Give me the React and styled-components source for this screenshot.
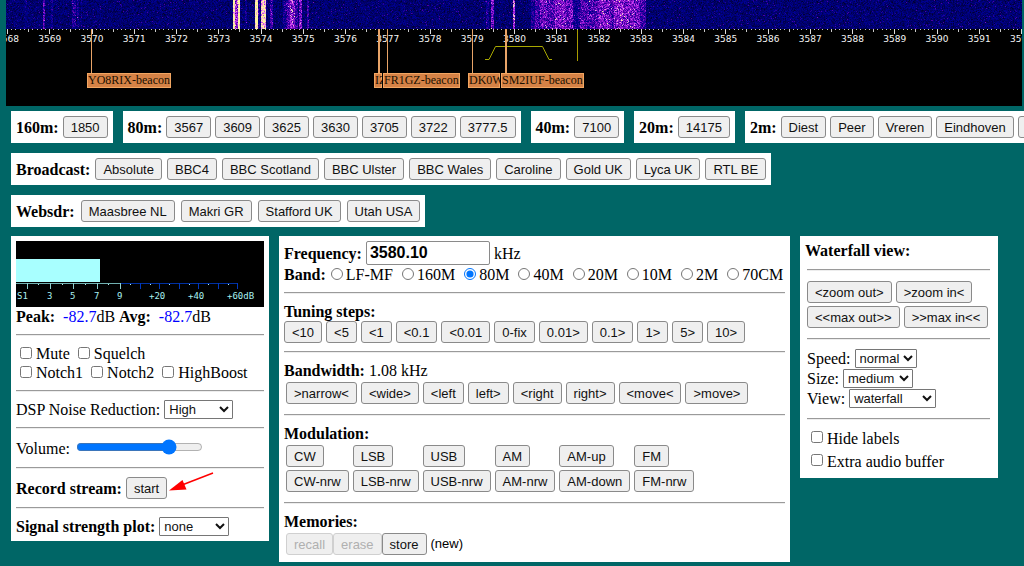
import React, { Component } from 'react'
import styled, { createGlobalStyle, css } from 'styled-components'

const GlobalStyle = createGlobalStyle`
    body {
        margin: 0;
        background: #006666;
        color: #000;
        font-family: "Liberation Serif", "Times New Roman", serif;
        font-size: 16px;
        line-height: 19px;
        overflow-x: hidden;
    }
`

const Page = styled.div`
    overflow: hidden;
`

const Spectrum = styled.div`
    margin: 0 2px 0 6px;
    background: #000;
`

const Drawing = styled.svg`
    display: block;
    width: 100%;
    height: auto;
`

const Presets = styled.nav`
    display: flex;
    flex-direction: column;
    gap: 10px;
    padding: 5px 0 0 11px;
`

const PresetLine = styled.div`
    display: flex;
    gap: 10px;
`

const PresetBox = styled.div`
    display: flex;
    flex: none;
    align-items: center;
    gap: ${props => props.$gap || '4px'};
    padding: 5px;
    background: #fff;
`

const Panels = styled.main`
    display: flex;
    align-items: flex-start;
    gap: 10px;
    padding: 9px 0 0 11px;
`

const Panel = styled.section`
    flex: none;
    box-sizing: border-box;
    padding: 5px;
    background: #fff;
    ${props => props.$width && css`
        width: ${props.$width};
    `}
`

const Indent = styled.div`
    padding: 1px 3px 2px 2px;
`

const Row = styled.div`
    display: flex;
    align-items: center;
    white-space: nowrap;
    gap: ${props => props.$gap || '4px'};
    min-height: ${props => props.$height || '19px'};
`

const ButtonRow = styled.div`
    display: flex;
    gap: ${props => props.$gap || '4px'};
    padding: ${props => props.$padding || '0'};
`

const Stack = styled.div`
    display: flex;
    flex-direction: column;
    gap: ${props => props.$gap || '0'};
    padding: ${props => props.$padding || '0'};
`

const ModeGrid = styled.div`
    display: grid;
    grid-template-columns: repeat(6, max-content);
    justify-items: start;
    gap: 3px 4px;
    padding: 2px;
`

const Title = styled.h2`
    margin: 0;
    font-size: 16px;
    line-height: 19px;
`

const Name = styled.b`
    white-space: nowrap;
`

const Rule = styled.hr`
    margin: 8px 0;
    border: 0;
    border-top: 1px solid #9a9a9a;
    border-bottom: 1px solid #ededed;
`

const Button = styled.button`
    box-sizing: border-box;
    height: 22px;
    padding: 0 7px;
    border: 1px solid #8a8a8a;
    border-radius: 3px;
    background: #efefef;
    color: #111;
    font-family: "Liberation Sans", Arial, sans-serif;
    font-size: 13px;
    white-space: nowrap;
    &:hover:enabled {
        background: #e5e5e5;
    }
    &:disabled {
        border-color: #d0d0d0;
        color: #b0b0b0;
    }
`

const Select = styled.select`
    box-sizing: border-box;
    width: ${props => props.$width};
    height: 19px;
    border: 1px solid #767676;
    border-radius: 1px;
    background-color: #fff;
    color: #111;
    font-family: "Liberation Sans", Arial, sans-serif;
    font-size: 13px;
`

const Frequency = styled.input`
    box-sizing: border-box;
    width: 124px;
    height: 24px;
    padding: 0 3px;
    border: 1px solid #8a8a8a;
    border-radius: 2px;
    font-family: "Liberation Sans", Arial, sans-serif;
    font-size: 16px;
    font-weight: bold;
`

const Option = styled.label`
    display: flex;
    align-items: center;
`

const Check = styled.input`
    width: 12px;
    height: 12px;
    margin: 0 4px 2px 4px;
`

const Radio = styled.input`
    width: 12px;
    height: 12px;
    margin: 0 3px 2px 0;
`

const Slider = styled.input`
    width: 127px;
    height: 16px;
    margin: 0 0 2px 2px;
`

const Level = styled.span`
    color: #0000ff;
`

const Note = styled.span`
    padding-left: 4px;
    font-family: "Liberation Sans", Arial, sans-serif;
    font-size: 13px;
    line-height: 22px;
`

const Pointed = styled.span`
    position: relative;
    display: flex;
`

const Arrow = styled.svg`
    position: absolute;
    left: 100%;
    top: -5px;
`

// ---- waterfall ----

const palette = ['#000030', '#00004c', '#000066', '#00007c', '#000092', '#2400a0', '#4c00a8', '#7c10c4', '#a420e0', '#cc48f0', '#f0a8d8', '#fff4a0']

// [from, to, strength] in pixels of the waterfall
const signals = [
    [19, 21, 1], [37, 39, 3.5], [45, 47, 1.5], [66, 70, 2], [71, 73, 2], [75, 76, 1.5],
    [227, 229, 9], [229, 232, 5.5], [232, 234, 9], [239, 241, 1.5], [249, 252, 9],
    [252, 254, 2], [255, 260, 8], [264, 267, 3], [277, 281, 2], [281, 284, 3.5], [284, 289, 5],
    [289, 292, 3], [293, 296, 4.5], [301, 303, 3], [480, 483, 2], [485, 488, 4],
    [507, 509, 6], [525, 529, 2], [529, 534, 3], [534, 541, 4], [541, 549, 3.5],
    [549, 560, 4.5], [560, 567, 4], [567, 574, 2], [574, 592, 3.5], [592, 604, 4.5],
    [604, 608, 3.5], [608, 617, 5], [617, 634, 4.5], [634, 640, 3],
]

const makeWaterfall = (width, height) => {
    const strength = new Array(width).fill(0)
    signals.forEach(([from, to, s]) => strength.fill(s, from, to))
    let seed = 4711
    const random = () => {
        seed = (seed * 1103515245 + 12345) % 2147483648
        return seed / 2147483648
    }
    const paths = palette.map(() => '')
    for (let y = 0; y < height; y++) {
        let start = 0
        let last = -1
        for (let x = 0; x <= width; x++) {
            let color = -2
            if (x < width) {
                const noise = (random() + random()) * 2.4 + (random() > 0.94 ? 2 : 0)
                const spread = strength[x] > 7 ? 0 : strength[x] * (random() - 0.5) * 0.6
                color = Math.max(0, Math.min(11, Math.floor(noise + 0.5 + strength[x] + spread)))
            }
            if (color !== last) {
                if (last >= 0) paths[last] += `M${start} ${y}h${x - start}v1H${start}z`
                start = x
                last = color
            }
        }
    }
    return paths
}

const waterfall = makeWaterfall(1016, 29)

const KHZ = 42.25
const marks = Array.from({ length: 25 }, (_, i) => ({ khz: 3568 + i, x: 1.5 + i * KHZ }))
const minor = Array.from({ length: 241 }, (_, i) => ({ i, x: 1 + i * KHZ / 10 }))

const beacons = [
    { name: 'YO8RIX-beacon', line: 85, x: 81, width: 84, stroke: 1 },
    { name: 'IZ', line: 372, x: 368, width: 8, stroke: 2 },
    { name: 'FR1GZ-beacon', line: 381, x: 377, width: 77, stroke: 1 },
    { name: 'DK0W', line: 466, x: 462, width: 32, stroke: 1 },
    { name: 'SM2IUF-beacon', line: 499, x: 495, width: 83, stroke: 2 },
]

const Waterfall = () => (
    <Spectrum>
        <Drawing viewBox="0 0 1016 106">
            <rect width="1016" height="106" fill="#000" />
            <g shapeRendering="crispEdges">
                {waterfall.map((d, i) => <path key={i} d={d} fill={palette[i]} />)}
                {minor.map(m => (
                    <rect key={m.i} x={m.x} y="29" width="1" height={m.i % 5 ? 1 : 3} fill="#c8c8c8" />
                ))}
                {marks.map(m => <rect key={m.khz} x={m.x - 0.5} y="29" width="1" height="5" fill="#ddd" />)}
            </g>
            <g fontFamily="DejaVu Sans" fontSize="9" fill="#f4f4f4" textAnchor="middle">
                {marks.map(m => <text key={m.khz} x={m.x} y="42">{m.khz}</text>)}
            </g>
            <path d="M479 59.5h4l6.500 -13h47l6.500 13h3" fill="none" stroke="#a8a800" />
            <rect x="571" y="30" width="1" height="31" fill="#a89c00" />
            {beacons.map(b => (
                <g key={b.name}>
                    <rect x={b.line} y="29" width={b.stroke} height="44" fill="#e8a468" />
                    <svg x={b.x} y="73" width={b.width} height="15">
                        <rect width={b.width} height="15" fill="#f2a662" />
                        <rect x="1" y="1" width={b.width - 2} height="13" fill="#d58246" />
                        <text x="1" y="11" fontFamily="Liberation Serif" fontSize="12" fill="#1a1000">{b.name}</text>
                    </svg>
                </g>
            ))}
        </Drawing>
    </Spectrum>
)

// ---- s-meter ----

const meterTicks = [11, 34, 57, 81, 104]
const overTicks = [124, 143, 163, 182, 202, 221]
const meterDots = [22, 46, 69, 92, 114, 134, 153, 173, 192, 212]
const meterLabels = [['S1', 1], ['3', 31], ['5', 54], ['7', 78], ['9', 101], ['+20', 133], ['+40', 172], ['+60dB', 211]]

const Meter = () => (
    <Drawing viewBox="0 0 248 66">
        <rect width="248" height="66" fill="#000" />
        <g shapeRendering="crispEdges">
            <rect y="18" width="84" height="23" fill="#a8ffff" />
            <rect y="42" width="104" height="1" fill="#70b0b0" />
            <rect x="104" y="42" width="118" height="1" fill="#0030a0" />
            {meterTicks.map(x => <rect key={x} x={x} y="42" width="1" height="6" fill="#90d0d0" />)}
            {overTicks.map(x => <rect key={x} x={x} y="42" width="1" height="6" fill="#0038c0" />)}
            {meterDots.map(x => <rect key={x} x={x} y="43" width="1" height="1" fill="#b0f0f0" />)}
        </g>
        <g fontFamily="DejaVu Sans Mono" fontSize="9" fill="#a8f0f0">
            {meterLabels.map(([text, x]) => <text key={text} x={x} y="58">{text}</text>)}
        </g>
    </Drawing>
)

// ---- controls ----

const bandPresets = [
    ['160m:', ['1850']],
    ['80m:', ['3567', '3609', '3625', '3630', '3705', '3722', '3777.5']],
    ['40m:', ['7100']],
    ['20m:', ['14175']],
    ['2m:', ['Diest', 'Peer', 'Vreren', 'Eindhoven', 'Genk']],
]
const broadcast = ['Absolute', 'BBC4', 'BBC Scotland', 'BBC Ulster', 'BBC Wales', 'Caroline', 'Gold UK', 'Lyca UK', 'RTL BE']
const websdr = ['Maasbree NL', 'Makri GR', 'Stafford UK', 'Utah USA']
const bands = ['LF-MF', '160M', '80M', '40M', '20M', '10M', '2M', '70CM']
const steps = ['<10', '<5', '<1', '<0.1', '<0.01', '0-fix', '0.01>', '0.1>', '1>', '5>', '10>']
const filters = ['>narrow<', '<wide>', '<left', 'left>', '<right', 'right>', '<move<', '>move>']
const modes = ['CW', 'LSB', 'USB', 'AM', 'AM-up', 'FM', 'CW-nrw', 'LSB-nrw', 'USB-nrw', 'AM-nrw', 'AM-down', 'FM-nrw']

const Buttons = ({ items }) => items.map(item => <Button type="button" key={item}>{item}</Button>)

const Preset = ({ name, items, gap }) => (
    <PresetBox $gap={gap}>
        <Name>{name}</Name>
        <Buttons items={items} />
    </PresetBox>
)

const CheckOption = ({ name }) => (
    <Option><Check type="checkbox" />{name}</Option>
)

const Picker = ({ id, name, width, height, options }) => (
    <Row $height={height}>
        <label htmlFor={id}>{name}</label>
        <Select id={id} $width={width}>
            {options.map(o => <option key={o}>{o}</option>)}
        </Select>
    </Row>
)

class App extends Component {
    state = {
        frequency: '3580.10',
        band: '80M',
        volume: 77
    }

    onChange = e => {
        this.setState({
            [e.target.name]: e.target.value
        })
    }

    render() {
        return (
            <Page>
                <GlobalStyle />
                <Waterfall />
                <Presets>
                    <PresetLine>
                        {bandPresets.map(([name, items]) => <Preset key={name} name={name} items={items} />)}
                    </PresetLine>
                    <PresetLine><Preset name="Broadcast:" items={broadcast} gap="5px" /></PresetLine>
                    <PresetLine><Preset name="Websdr:" items={websdr} gap="6px" /></PresetLine>
                </Presets>
                <Panels>
                    <Panel $width="258px">
                        <Meter />
                        <Row>
                            <span><b>Peak:</b>&nbsp; <Level>-82.7</Level>dB <b>Avg:</b>&nbsp; <Level>-82.7</Level>dB</span>
                        </Row>
                        <Rule />
                        <Row><CheckOption name="Mute" /><CheckOption name="Squelch" /></Row>
                        <Row><CheckOption name="Notch1" /><CheckOption name="Notch2" /><CheckOption name="HighBoost" /></Row>
                        <Rule />
                        <Picker id="noise" name="DSP Noise Reduction:" width="69px" options={['High', 'Medium', 'Low', 'Off']} />
                        <Rule />
                        <Row $height="22px">
                            <label htmlFor="volume">Volume:</label>
                            <Slider type="range" id="volume" name="volume" value={this.state.volume} onChange={this.onChange} />
                        </Row>
                        <Rule />
                        <Row $height="22px">
                            <Name>Record stream:</Name>
                            <Pointed>
                                <Button type="button">start</Button>
                                <Arrow width="48" height="20" viewBox="0 0 48 20">
                                    <path d="M46 1L15 13" stroke="#f00" strokeWidth="1.500" />
                                    <path d="M2 18.500L15.500 8L19.500 17.500z" fill="#f00" />
                                </Arrow>
                            </Pointed>
                        </Row>
                        <Rule />
                        <Picker id="plot" name={<b>Signal strength plot:</b>} width="70px" options={['none', 'slow', 'fast']} />
                    </Panel>

                    <Panel $width="511px">
                        <Row $height="24px">
                            <label htmlFor="frequency"><b>Frequency:</b></label>
                            <Frequency type="text" id="frequency" name="frequency" value={this.state.frequency} onChange={this.onChange} />
                            <span>kHz</span>
                        </Row>
                        <Row $gap="5px">
                            <Name>Band:</Name>
                            <Row $gap="9px">
                                {bands.map(band => (
                                    <Option key={band}>
                                        <Radio type="radio" name="band" value={band} checked={this.state.band === band} onChange={this.onChange} />
                                        {band}
                                    </Option>
                                ))}
                            </Row>
                        </Row>
                        <Rule />
                        <Title>Tuning steps:</Title>
                        <ButtonRow><Buttons items={steps} /></ButtonRow>
                        <Rule />
                        <Row><Name>Bandwidth:</Name><span>1.08 kHz</span></Row>
                        <ButtonRow $padding="2px"><Buttons items={filters} /></ButtonRow>
                        <Rule />
                        <Title>Modulation:</Title>
                        <ModeGrid><Buttons items={modes} /></ModeGrid>
                        <Rule />
                        <Title>Memories:</Title>
                        <ButtonRow $gap="0" $padding="2px">
                            <Button type="button" disabled>recall</Button>
                            <Button type="button" disabled>erase</Button>
                            <Button type="button">store</Button>
                            <Note>(new)</Note>
                        </ButtonRow>
                    </Panel>

                    <Panel $width="198px">
                        <Title>Waterfall view:</Title>
                        <Indent>
                            <Rule />
                            <Stack $gap="3px" $padding="2px 0">
                                <ButtonRow><Buttons items={['<zoom out>', '>zoom in<']} /></ButtonRow>
                                <ButtonRow><Buttons items={['<<max out>>', '>>max in<<']} /></ButtonRow>
                            </Stack>
                            <Rule />
                            <Stack $padding="0 0 2px">
                                <Picker id="speed" name="Speed:" width="62px" height="20px" options={['normal', 'slow', 'fast']} />
                                <Picker id="size" name="Size:" width="70px" height="20px" options={['medium', 'small', 'large']} />
                                <Picker id="view" name="View:" width="87px" height="20px" options={['waterfall', 'spectrum']} />
                            </Stack>
                            <Rule />
                            <Stack $gap="3px">
                                <Row $height="20px"><CheckOption name="Hide labels" /></Row>
                                <Row $height="20px"><CheckOption name="Extra audio buffer" /></Row>
                            </Stack>
                        </Indent>
                    </Panel>
                </Panels>
            </Page>
        )
    }
}

export default App
